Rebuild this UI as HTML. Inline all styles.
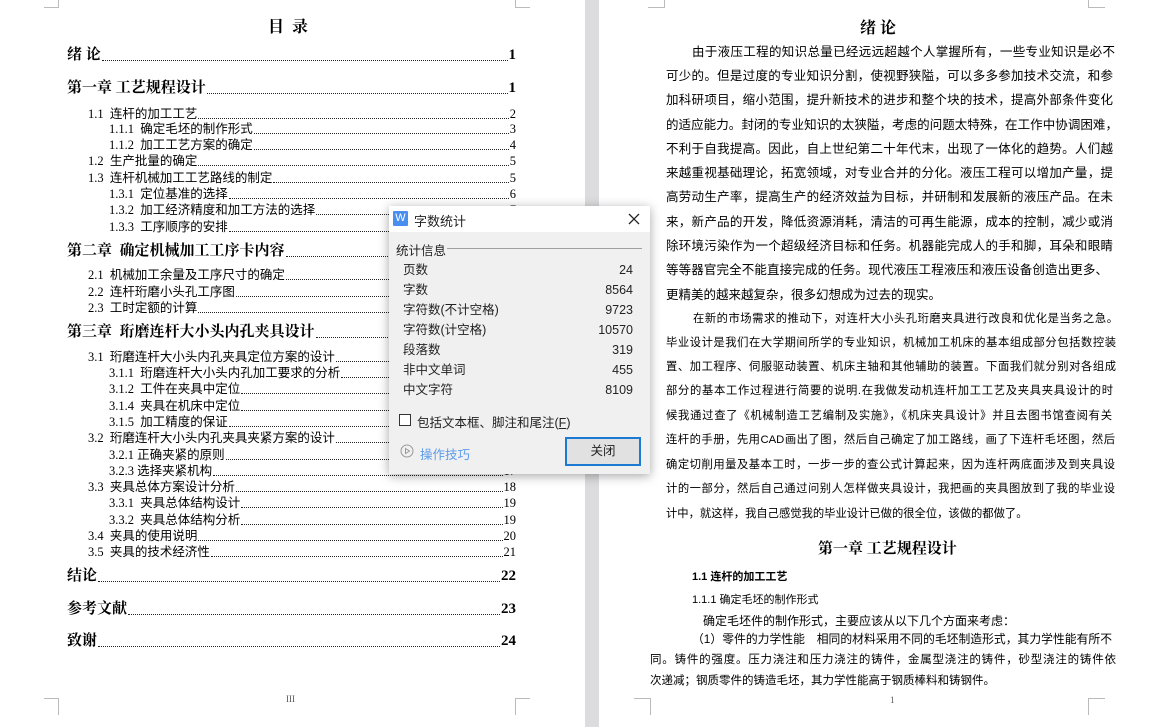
<!DOCTYPE html>
<html><head><meta charset="utf-8"><style>
*{margin:0;padding:0;box-sizing:border-box}
body{width:1150px;height:727px;position:relative;overflow:hidden;background:#fff;font-family:"Liberation Serif","Noto Sans CJK SC",sans-serif;color:#000}
.gap{position:absolute;left:585px;top:0;width:14px;height:727px;background:#dcdcde}
.a{position:absolute;white-space:nowrap}
.c{position:absolute;border-color:#bbb;border-style:solid;border-width:0}
.t{position:absolute;display:flex;align-items:flex-end;white-space:nowrap;line-height:1}
.t .d{flex:1;border-bottom:1px dotted #222;margin:0 1px 2px}
.t0{font-size:15px;font-weight:bold;left:67px;width:449px;font-family:"Liberation Serif","Noto Serif CJK SC",serif}
.t1{font-size:12.5px;left:88px;width:428px}
.t2{font-size:12.5px;left:109px;width:407px}
.b{position:absolute;font-size:12.5px;line-height:1;white-space:nowrap;text-align:justify;text-align-last:justify;font-family:"Liberation Sans","Noto Sans CJK SC",sans-serif}
.s{font-size:11.3px}
.dlg{position:absolute;left:389px;top:206px;width:261px;height:268px;background:#f0f0f0;box-shadow:0 2px 10px rgba(0,0,0,.35);font-family:"Liberation Sans","Noto Sans CJK SC",sans-serif;font-size:12.5px;color:#222}
.row{position:absolute;left:14px;width:230px;display:flex;justify-content:space-between;line-height:1}
</style></head><body>
<div class="gap"></div>
<div class="c" style="left:44px;top:0;width:15px;height:8px;border-right-width:1px;border-bottom-width:1px"></div>
<div class="c" style="left:515px;top:0;width:15px;height:8px;border-left-width:1px;border-bottom-width:1px"></div>
<div class="c" style="left:44px;top:698px;width:15px;height:17px;border-right-width:1px;border-top-width:1px"></div>
<div class="c" style="left:515px;top:698px;width:15px;height:17px;border-left-width:1px;border-top-width:1px"></div>
<div class="c" style="left:648px;top:0;width:17px;height:8px;border-right-width:1px;border-bottom-width:1px"></div>
<div class="c" style="left:1088px;top:0;width:17px;height:8px;border-left-width:1px;border-bottom-width:1px"></div>
<div class="c" style="left:634px;top:698px;width:17px;height:17px;border-right-width:1px;border-top-width:1px"></div>
<div class="c" style="left:1088px;top:698px;width:17px;height:17px;border-left-width:1px;border-top-width:1px"></div>

<div class="a" style="left:268px;top:14px;font-size:16px;font-weight:bold;font-family:'Noto Serif CJK SC',serif">目&nbsp;&nbsp;录</div>

<div class="t t0" style="top:48px"><span>绪 论</span><span class="d"></span><span>1</span></div>
<div class="t t0" style="top:81px"><span>第一章 工艺规程设计</span><span class="d"></span><span>1</span></div>
<div class="t t1" style="top:108px"><span>1.1&nbsp; 连杆的加工工艺</span><span class="d"></span><span>2</span></div>
<div class="t t2" style="top:123px"><span>1.1.1&nbsp; 确定毛坯的制作形式</span><span class="d"></span><span>3</span></div>
<div class="t t2" style="top:139px"><span>1.1.2&nbsp; 加工工艺方案的确定</span><span class="d"></span><span>4</span></div>
<div class="t t1" style="top:155px"><span>1.2&nbsp; 生产批量的确定</span><span class="d"></span><span>5</span></div>
<div class="t t1" style="top:172px"><span>1.3&nbsp; 连杆机械加工工艺路线的制定</span><span class="d"></span><span>5</span></div>
<div class="t t2" style="top:188px"><span>1.3.1&nbsp; 定位基准的选择</span><span class="d"></span><span>6</span></div>
<div class="t t2" style="top:204px"><span>1.3.2&nbsp; 加工经济精度和加工方法的选择</span><span class="d"></span><span>7</span></div>
<div class="t t2" style="top:221px"><span>1.3.3&nbsp; 工序顺序的安排</span><span class="d"></span><span>8</span></div>
<div class="t t0" style="top:244px"><span>第二章&nbsp; 确定机械加工工序卡内容</span><span class="d"></span><span>9</span></div>
<div class="t t1" style="top:269px"><span>2.1&nbsp; 机械加工余量及工序尺寸的确定</span><span class="d"></span><span>9</span></div>
<div class="t t1" style="top:286px"><span>2.2&nbsp; 连杆珩磨小头孔工序图</span><span class="d"></span><span>11</span></div>
<div class="t t1" style="top:302px"><span>2.3&nbsp; 工时定额的计算</span><span class="d"></span><span>12</span></div>
<div class="t t0" style="top:325px"><span>第三章&nbsp; 珩磨连杆大小头内孔夹具设计</span><span class="d"></span><span>13</span></div>
<div class="t t1" style="top:351px"><span>3.1&nbsp; 珩磨连杆大小头内孔夹具定位方案的设计</span><span class="d"></span><span>13</span></div>
<div class="t t2" style="top:367px"><span>3.1.1&nbsp; 珩磨连杆大小头内孔加工要求的分析</span><span class="d"></span><span>13</span></div>
<div class="t t2" style="top:383px"><span>3.1.2&nbsp; 工件在夹具中定位</span><span class="d"></span><span>14</span></div>
<div class="t t2" style="top:400px"><span>3.1.4&nbsp; 夹具在机床中定位</span><span class="d"></span><span>15</span></div>
<div class="t t2" style="top:416px"><span>3.1.5&nbsp; 加工精度的保证</span><span class="d"></span><span>15</span></div>
<div class="t t1" style="top:432px"><span>3.2&nbsp; 珩磨连杆大小头内孔夹具夹紧方案的设计</span><span class="d"></span><span>16</span></div>
<div class="t t2" style="top:449px"><span>3.2.1 正确夹紧的原则</span><span class="d"></span><span>16</span></div>
<div class="t t2" style="top:465px"><span>3.2.3 选择夹紧机构</span><span class="d"></span><span>17</span></div>
<div class="t t1" style="top:481px"><span>3.3&nbsp; 夹具总体方案设计分析</span><span class="d"></span><span>18</span></div>
<div class="t t2" style="top:497px"><span>3.3.1&nbsp; 夹具总体结构设计</span><span class="d"></span><span>19</span></div>
<div class="t t2" style="top:514px"><span>3.3.2&nbsp; 夹具总体结构分析</span><span class="d"></span><span>19</span></div>
<div class="t t1" style="top:530px"><span>3.4&nbsp; 夹具的使用说明</span><span class="d"></span><span>20</span></div>
<div class="t t1" style="top:546px"><span>3.5&nbsp; 夹具的技术经济性</span><span class="d"></span><span>21</span></div>
<div class="t t0" style="top:569px"><span>结论</span><span class="d"></span><span>22</span></div>
<div class="t t0" style="top:602px"><span>参考文献</span><span class="d"></span><span>23</span></div>
<div class="t t0" style="top:634px"><span>致谢</span><span class="d"></span><span>24</span></div>
<div class="a" style="left:286px;top:694px;font-size:9px;color:#555">III</div>

<div class="a" style="left:860px;top:15px;font-size:16px;font-weight:bold;font-family:'Noto Serif CJK SC',serif">绪 论</div>
<div class="b" style="left:692px;top:46px;width:423px">由于液压工程的知识总量已经远远超越个人掌握所有，一些专业知识是必不</div>
<div class="b" style="left:666px;top:70px;width:447px">可少的。但是过度的专业知识分割，使视野狭隘，可以多多参加技术交流，和参</div>
<div class="b" style="left:666px;top:94px;width:447px">加科研项目，缩小范围，提升新技术的进步和整个块的技术，提高外部条件变化</div>
<div class="b" style="left:666px;top:119px;width:452px">的适应能力。封闭的专业知识的太狭隘，考虑的问题太特殊，在工作中协调困难，</div>
<div class="b" style="left:666px;top:143px;width:447px">不利于自我提高。因此，自上世纪第二十年代末，出现了一体化的趋势。人们越</div>
<div class="b" style="left:666px;top:167px;width:447px">来越重视基础理论，拓宽领域，对专业合并的分化。液压工程可以增加产量，提</div>
<div class="b" style="left:666px;top:191px;width:447px">高劳动生产率，提高生产的经济效益为目标，并研制和发展新的液压产品。在未</div>
<div class="b" style="left:666px;top:216px;width:447px">来，新产品的开发，降低资源消耗，清洁的可再生能源，成本的控制，减少或消</div>
<div class="b" style="left:666px;top:240px;width:447px">除环境污染作为一个超级经济目标和任务。机器能完成人的手和脚，耳朵和眼睛</div>
<div class="b" style="left:666px;top:264px;width:442px">等等器官完全不能直接完成的任务。现代液压工程液压和液压设备创造出更多、</div>
<div class="b" style="left:666px;top:289px;text-align-last:auto">更精美的越来越复杂，很多幻想成为过去的现实。</div>
<div class="b s" style="left:693px;top:314px;width:425px">在新的市场需求的推动下，对连杆大小头孔珩磨夹具进行改良和优化是当务之急。</div>
<div class="b s" style="left:666px;top:338px;width:450px">毕业设计是我们在大学期间所学的专业知识，机械加工机床的基本组成部分包括数控装</div>
<div class="b s" style="left:666px;top:362px;width:450px">置、加工程序、伺服驱动装置、机床主轴和其他辅助的装置。下面我们就分别对各组成</div>
<div class="b s" style="left:666px;top:386px;width:447px">部分的基本工作过程进行简要的说明.在我做发动机连杆加工工艺及夹具夹具设计的时</div>
<div class="b s" style="left:666px;top:411px;width:446px">候我通过查了《机械制造工艺编制及实施》，《机床夹具设计》并且去图书馆查阅有关</div>
<div class="b s" style="left:666px;top:435px;width:449px">连杆的手册，先用CAD画出了图，然后自己确定了加工路线，画了下连杆毛坯图，然后</div>
<div class="b s" style="left:666px;top:460px;width:449px">确定切削用量及基本工时，一步一步的查公式计算起来，因为连杆两底面涉及到夹具设</div>
<div class="b s" style="left:666px;top:484px;width:449px">计的一部分，然后自己通过问别人怎样做夹具设计，我把画的夹具图放到了我的毕业设</div>
<div class="b s" style="left:666px;top:509px;text-align-last:auto">计中，就这样，我自己感觉我的毕业设计已做的很全位，该做的都做了。</div>
<div class="a" style="left:818px;top:537px;font-size:15px;font-weight:bold;font-family:'Noto Serif CJK SC',serif">第一章 工艺规程设计</div>
<div class="a" style="left:692px;top:568px;font-size:11px;font-weight:bold;font-family:'Liberation Sans','Noto Sans CJK SC',sans-serif">1.1 连杆的加工工艺</div>
<div class="a" style="left:692px;top:591px;font-size:11px;font-family:'Liberation Sans','Noto Sans CJK SC',sans-serif">1.1.1 确定毛坯的制作形式</div>
<div class="b" style="left:703px;top:615px;font-size:12px;text-align-last:auto">确定毛坯件的制作形式，主要应该从以下几个方面来考虑：</div>
<div class="b" style="left:692px;top:634px;width:420px;font-size:11.8px">（1）零件的力学性能　相同的材料采用不同的毛坯制造形式，其力学性能有所不</div>
<div class="b" style="left:650px;top:655px;width:466px;font-size:11.5px">同。铸件的强度。压力浇注和压力浇注的铸件，金属型浇注的铸件，砂型浇注的铸件依</div>
<div class="b" style="left:650px;top:676px;font-size:11.5px;text-align-last:auto">次递减；钢质零件的铸造毛坯，其力学性能高于钢质棒料和铸钢件。</div>
<div class="a" style="left:890px;top:695px;font-size:9px;color:#555">1</div>

<div class="dlg">
  <div style="position:absolute;left:0;top:0;width:261px;height:26px;background:#fff"></div>
  <div style="position:absolute;left:4px;top:5px;width:15px;height:15px;background:#4a8ff0;color:#fff;font-size:11px;line-height:15px;text-align:center;border-radius:1px">W</div>
  <div class="a" style="left:25px;top:5px;font-size:13px">字数统计</div>
  <svg style="position:absolute;left:239px;top:7px" width="12" height="12"><path d="M1 1L11 11M11 1L1 11" stroke="#222" stroke-width="1.3"/></svg>
  <div class="a" style="left:7px;top:34px;font-size:12.5px">统计信息</div>
  <div style="position:absolute;left:58px;top:42px;width:195px;height:1px;background:#a0a0a0"></div>
  <div class="row" style="top:58px"><span>页数</span><span>24</span></div>
  <div class="row" style="top:78px"><span>字数</span><span>8564</span></div>
  <div class="row" style="top:98px"><span>字符数(不计空格)</span><span>9723</span></div>
  <div class="row" style="top:118px"><span>字符数(计空格)</span><span>10570</span></div>
  <div class="row" style="top:138px"><span>段落数</span><span>319</span></div>
  <div class="row" style="top:158px"><span>非中文单词</span><span>455</span></div>
  <div class="row" style="top:178px"><span>中文字符</span><span>8109</span></div>
  <div style="position:absolute;left:10px;top:208px;width:12px;height:12px;border:1px solid #333;background:#fff"></div>
  <div class="a" style="left:28px;top:206px">包括文本框、脚注和尾注(<u>F</u>)</div>
  <svg style="position:absolute;left:11px;top:238px" width="14" height="14"><circle cx="7" cy="7" r="6" fill="none" stroke="#999"/><path d="M5.5 4.5L9.5 7L5.5 9.5Z" fill="none" stroke="#999"/></svg>
  <div class="a" style="left:31px;top:238px;color:#5b9bea">操作技巧</div>
  <div style="position:absolute;left:176px;top:231px;width:76px;height:29px;border:2px solid #1c7ad4;background:#e1e1e1;text-align:center;line-height:25px">关闭</div>
</div>
</body></html>
